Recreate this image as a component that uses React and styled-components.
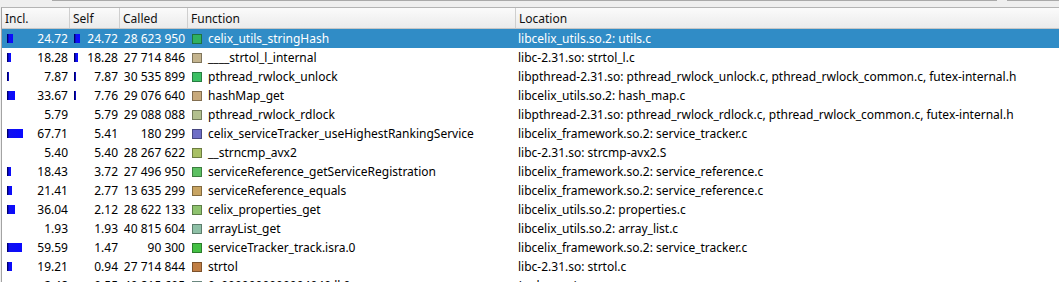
import React from "react";
import styled, { createGlobalStyle } from "styled-components";

const Global = createGlobalStyle`
  html, body { margin: 0; padding: 0; background: #efefef; overflow: hidden; }
  body { font-family: "Noto Sans", "Open Sans", sans-serif; font-size: 12px; color: #000; }
`;

const Page = styled.div`
  width: 1059px;
  height: 282px;
  overflow: hidden;
  background: #efefef;
`;

const TopStrip = styled.div`
  height: 7px;
  display: flex;
  padding-left: 52px;
  gap: 10px;
`;

const TopSegment = styled.div`
  flex: ${(p) => (p.$w ? `0 0 ${p.$w}px` : "1")};
  border-top: 1px solid #a9a9a9;
`;

const Frame = styled.div`
  margin-left: 1px;
  border-left: 1px solid #a3a3a3;
  border-top: 1px solid #b4b4b4;
  background: #fff;
  height: 300px;
`;

const cols = "68px 50px 68px 328px 1fr";

const Header = styled.div`
  display: grid;
  grid-template-columns: ${cols};
  height: 20px;
  background: linear-gradient(#fbfbfb, #ebebeb);
  border-bottom: 1px solid #c6c6c6;
`;

const HeadCell = styled.div`
  padding-left: 3px;
  display: flex;
  align-items: center;
  border-right: ${(p) => (p.$last ? "none" : "1px solid #cfcfcf")};
  white-space: nowrap;
  color: #111;
`;

const Row = styled.div`
  display: grid;
  grid-template-columns: ${cols};
  height: 19px;
  align-items: center;
  background: ${(p) => (p.$sel ? "#308cc6" : "transparent")};
  color: ${(p) => (p.$sel ? "#fff" : "#000")};
  white-space: nowrap;
`;

const NumCell = styled.div`
  display: flex;
  align-items: center;
  justify-content: space-between;
  padding-left: ${(p) => p.$pl}px;
  padding-right: ${(p) => p.$pr}px;
  height: 100%;
`;

const Bar = styled.span`
  display: inline-block;
  height: 9px;
  box-sizing: border-box;
  background: linear-gradient(90deg, #00009a 0px, #1010f0 1px, #0a0aff 100%);
  border-left: 1px solid #00006a;
`;

const Num = styled.span`
  margin-left: auto;
`;

const FuncCell = styled.div`
  display: flex;
  align-items: center;
  padding-left: 4px;
  overflow: hidden;
`;

const Swatch = styled.span`
  width: 10px;
  height: 10px;
  box-sizing: border-box;
  flex: 0 0 10px;
  background: ${(p) => p.$c};
  border: 1px solid rgba(0, 0, 0, 0.35);
  margin-right: 6px;
`;

const LocCell = styled.div`
  padding-left: 2px;
  overflow: hidden;
`;

const rows = [
  { incl: "24.72", ib: 6, self: "24.72", sb: 6, called: "28 623 950", c: "#2fb160", fn: "celix_utils_stringHash", loc: "libcelix_utils.so.2: utils.c", sel: true },
  { incl: "18.28", ib: 4, self: "18.28", sb: 4, called: "27 714 846", c: "#c4b48e", fn: "____strtol_l_internal", loc: "libc-2.31.so: strtol_l.c" },
  { incl: "7.87", ib: 2, self: "7.87", sb: 2, called: "30 535 899", c: "#3cc064", fn: "pthread_rwlock_unlock", loc: "libpthread-2.31.so: pthread_rwlock_unlock.c, pthread_rwlock_common.c, futex-internal.h" },
  { incl: "33.67", ib: 8, self: "7.76", sb: 2, called: "29 076 640", c: "#c8aa7c", fn: "hashMap_get", loc: "libcelix_utils.so.2: hash_map.c" },
  { incl: "5.79", ib: 0, self: "5.79", sb: 0, called: "29 088 088", c: "#b2c08e", fn: "pthread_rwlock_rdlock", loc: "libpthread-2.31.so: pthread_rwlock_rdlock.c, pthread_rwlock_common.c, futex-internal.h" },
  { incl: "67.71", ib: 16, self: "5.41", sb: 0, called: "180 299", c: "#6e6ec6", fn: "celix_serviceTracker_useHighestRankingService", loc: "libcelix_framework.so.2: service_tracker.c" },
  { incl: "5.40", ib: 0, self: "5.40", sb: 0, called: "28 267 622", c: "#a8c064", fn: "__strncmp_avx2", loc: "libc-2.31.so: strcmp-avx2.S" },
  { incl: "18.43", ib: 4, self: "3.72", sb: 0, called: "27 496 950", c: "#5cc062", fn: "serviceReference_getServiceRegistration", loc: "libcelix_framework.so.2: service_reference.c" },
  { incl: "21.41", ib: 5, self: "2.77", sb: 0, called: "13 635 299", c: "#c8a462", fn: "serviceReference_equals", loc: "libcelix_framework.so.2: service_reference.c" },
  { incl: "36.04", ib: 8, self: "2.12", sb: 0, called: "28 622 133", c: "#8ec26e", fn: "celix_properties_get", loc: "libcelix_utils.so.2: properties.c" },
  { incl: "1.93", ib: 0, self: "1.93", sb: 0, called: "40 815 604", c: "#8ec0a6", fn: "arrayList_get", loc: "libcelix_utils.so.2: array_list.c" },
  { incl: "59.59", ib: 15, self: "1.47", sb: 0, called: "90 300", c: "#44c044", fn: "serviceTracker_track.isra.0", loc: "libcelix_framework.so.2: service_tracker.c" },
  { incl: "19.21", ib: 5, self: "0.94", sb: 0, called: "27 714 844", c: "#c07e44", fn: "strtol", loc: "libc-2.31.so: strtol.c" },
  { incl: "2.48", ib: 0, self: "0.55", sb: 0, called: "40 815 605", c: "#a2d0c2", fn: "0x0000000000004040 ll 0", loc: "(unknown)" },
];

export default function App() {
  return (
    <Page>
      <Global />
      <TopStrip>
        <TopSegment />
        <TopSegment $w={52} />
      </TopStrip>
      <Frame>
        <Header>
          <HeadCell>Incl.</HeadCell>
          <HeadCell>Self</HeadCell>
          <HeadCell>Called</HeadCell>
          <HeadCell>Function</HeadCell>
          <HeadCell $last>Location</HeadCell>
        </Header>
        {rows.map((r, i) => (
          <Row key={i} $sel={r.sel}>
            <NumCell $pl={5} $pr={2}>
              {r.ib > 0 && <Bar style={{ width: r.ib }} />}
              <Num>{r.incl}</Num>
            </NumCell>
            <NumCell $pl={4} $pr={2}>
              {r.sb > 0 && <Bar style={{ width: r.sb }} />}
              <Num>{r.self}</Num>
            </NumCell>
            <NumCell $pl={2} $pr={3}>
              <Num>{r.called}</Num>
            </NumCell>
            <FuncCell>
              <Swatch $c={r.c} />
              {r.fn}
            </FuncCell>
            <LocCell>{r.loc}</LocCell>
          </Row>
        ))}
      </Frame>
    </Page>
  );
}
